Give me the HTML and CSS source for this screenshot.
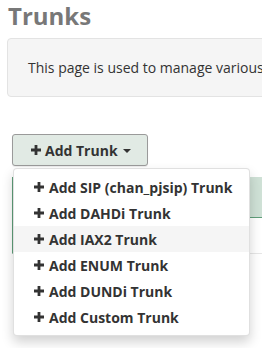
FILE: index.html
```html
<!DOCTYPE html>
<html lang="en">
<head>
    <meta charset="UTF-8">
    <title>Trunks</title>
    <link rel="stylesheet" href="styles.css">
</head>
<body>
    <h1 class="page-title">Trunks</h1>
    <div class="info-box">This page is used to manage various system trunks</div>

    <div class="toolbar">
        <div class="dropdown">
            <button class="btn-add">
                <svg class="plus" viewBox="0 0 10 10"><path d="M3.6 0h2.8v3.6H10v2.8H6.4V10H3.6V6.4H0V3.6h3.6z"/></svg>
                Add Trunk
                <span class="caret"></span>
            </button>
            <ul class="dropdown-menu">
                <li><svg class="plus" viewBox="0 0 10 10"><path d="M3.6 0h2.8v3.6H10v2.8H6.4V10H3.6V6.4H0V3.6h3.6z"/></svg>Add SIP (chan_pjsip) Trunk</li>
                <li><svg class="plus" viewBox="0 0 10 10"><path d="M3.6 0h2.8v3.6H10v2.8H6.4V10H3.6V6.4H0V3.6h3.6z"/></svg>Add DAHDi Trunk</li>
                <li class="active"><svg class="plus" viewBox="0 0 10 10"><path d="M3.6 0h2.8v3.6H10v2.8H6.4V10H3.6V6.4H0V3.6h3.6z"/></svg>Add IAX2 Trunk</li>
                <li><svg class="plus" viewBox="0 0 10 10"><path d="M3.6 0h2.8v3.6H10v2.8H6.4V10H3.6V6.4H0V3.6h3.6z"/></svg>Add ENUM Trunk</li>
                <li><svg class="plus" viewBox="0 0 10 10"><path d="M3.6 0h2.8v3.6H10v2.8H6.4V10H3.6V6.4H0V3.6h3.6z"/></svg>Add DUNDi Trunk</li>
                <li><svg class="plus" viewBox="0 0 10 10"><path d="M3.6 0h2.8v3.6H10v2.8H6.4V10H3.6V6.4H0V3.6h3.6z"/></svg>Add Custom Trunk</li>
            </ul>
        </div>
    </div>

    <div class="trunk-table">
        <div class="table-head"></div>
        <div class="table-row"></div>
        <div class="table-row"></div>
    </div>
</body>
</html>
```

FILE: styles.css
```css
html {
    overflow: hidden;
}

body {
    margin: 0;
    padding: 0 0 0 7px;
    font-family: "Open Sans", "Liberation Sans", sans-serif;
    color: #333333;
    background: #ffffff;
}

.page-title {
    margin: 0;
    padding: 2px 0 0 1px;
    height: 36px;
    font-size: 24px;
    line-height: 28px;
    font-weight: 700;
    color: #787878;
}

.info-box {
    height: 57px;
    margin-right: -40px;
    padding: 0 0 0 20px;
    display: flex;
    align-items: center;
    font-size: 14px;
    background: #f5f5f5;
    border: 1px solid #e3e3e3;
    border-radius: 4px;
    white-space: nowrap;
    overflow: hidden;
}

.toolbar {
    padding: 37px 0 0 5px;
}

.dropdown {
    position: relative;
    display: inline-block;
}

.btn-add {
    display: flex;
    align-items: center;
    height: 32px;
    width: 136px;
    padding: 0 0 0 18px;
    font-family: inherit;
    font-size: 14px;
    font-weight: 700;
    color: #333333;
    background: #e1eae4;
    border: 1px solid #9a9a9a;
    border-radius: 3px;
    box-shadow: 0 1px 1px rgba(0, 0, 0, 0.08);
}

.btn-add .plus {
    margin-right: 4px;
}

.plus {
    width: 10px;
    height: 10px;
    fill: #333333;
    flex: none;
}

.caret {
    display: inline-block;
    margin-left: 5px;
    margin-top: 2px;
    border-top: 4px solid #333333;
    border-left: 4px solid transparent;
    border-right: 4px solid transparent;
}

.dropdown-menu {
    position: absolute;
    top: 34px;
    left: 1px;
    z-index: 10;
    width: 235px;
    margin: 0;
    padding: 5px 0;
    list-style: none;
    background: #ffffff;
    border: 1px solid rgba(0, 0, 0, 0.12);
    border-radius: 4px;
    box-shadow: 0 6px 12px rgba(0, 0, 0, 0.18);
}

.dropdown-menu li {
    display: flex;
    align-items: center;
    height: 26px;
    padding-left: 20px;
    font-size: 14px;
    font-weight: 700;
    white-space: nowrap;
}

.dropdown-menu li .plus {
    margin-right: 5px;
}

.dropdown-menu li.active {
    background: #f5f5f5;
}

.trunk-table {
    margin: 11px -40px 0 5px;
}

.table-head {
    height: 40px;
    background: #cfe1d6;
    border-left: 1px solid #5f9e7a;
    border-bottom: 1px solid #5f9e7a;
}

.table-row {
    height: 35px;
    border-left: 1px solid #5f9e7a;
    border-bottom: 1px solid #e6e6e6;
}

.table-row + .table-row {
    height: 140px;
    border-left-color: transparent;
    border-bottom: none;
}
```
